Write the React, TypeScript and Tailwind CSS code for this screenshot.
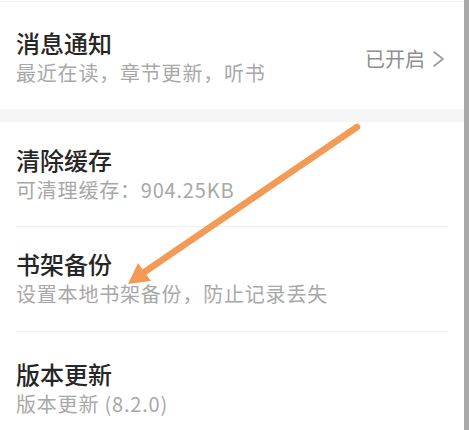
import React from "react";

const font = { fontFamily: '"Noto Sans CJK SC", "Noto Sans", sans-serif' };

function Item({
  title,
  sub,
  right,
  pt,
  pb,
  last,
}: {
  title: string;
  sub: string;
  right?: boolean;
  pt: string;
  pb: string;
  last?: boolean;
}) {
  return (
    <div className={`shrink-0 px-4 ${pt}`}>
      <div className={`flex items-center ${pb} ${last ? "" : "border-b border-[#f0f0f0]"}`}>
        <div className="flex flex-1 flex-col gap-[1px]">
          <div className="text-[24px] leading-[30px] text-[#262626] font-medium">{title}</div>
          <div className="text-[20px] leading-[28px] text-[#a8a8a8] tracking-[0.8px]">{sub}</div>
        </div>
        {right && (
          <div className="mr-[3px] flex items-center gap-[7px] pt-[2px]">
            <span className="text-[20px] leading-[28px] text-[#8e8e8e]">已开启</span>
            <svg width="13" height="18" viewBox="0 0 13 18" fill="none">
              <polyline points="2,2 11,9 2,16" stroke="#999" strokeWidth="1.6" strokeLinecap="round" strokeLinejoin="round" />
            </svg>
          </div>
        )}
      </div>
    </div>
  );
}

export default function App() {
  return (
    <div className="relative flex h-[430px] w-[469px] overflow-hidden bg-white" style={font}>
      <div className="mt-[1px] flex flex-1 flex-col border-t border-[#f3f3f3]">
        <Item title="消息通知" sub="最近在读，章节更新，听书" right pt="pt-[26px]" pb="pb-[22px]" last />
        <div className="h-[13px] shrink-0 bg-[#f5f5f5]" />
        <Item title="清除缓存" sub="可清理缓存：904.25KB" pt="pt-[23px]" pb="pb-[22px]" />
        <Item title="书架备份" sub="设置本地书架备份，防止记录丢失" pt="pt-[22px]" pb="pb-[23px]" />
        <Item title="版本更新" sub="版本更新 (8.2.0)" pt="pt-[27px]" pb="pb-[23px]" last />
      </div>
      <div className="w-[5px] bg-[#a9a9a9]" />
      <svg className="pointer-events-none absolute left-0 top-0" width="469" height="430" viewBox="0 0 469 430">
        <line x1="357" y1="127" x2="143" y2="273" stroke="#f39b55" strokeWidth="6.5" strokeLinecap="round" />
        <polygon points="128,284 138,263 151,281" fill="#f39b55" />
      </svg>
    </div>
  );
}
